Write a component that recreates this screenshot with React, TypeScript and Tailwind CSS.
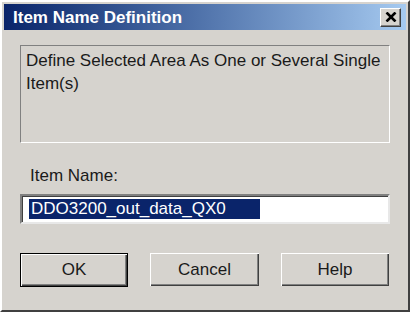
export default function App() {
  return (
    <div
      className="w-[410px] h-[312px] bg-[#d6d3ce] border-t-2 border-l-2 border-t-[#ffffff] border-l-[#ffffff] border-r-2 border-b-2 border-r-[#404040] border-b-[#404040] p-[2px] flex flex-col"
      style={{ fontFamily: '"Liberation Sans", Arial, sans-serif' }}
    >
      <div className="h-[26px] flex items-center justify-between pl-[9px] pr-[5px] bg-gradient-to-r from-[#0a246a] to-[#a6caf0]">
        <span className="text-white font-bold text-[17px] leading-none">Item Name Definition</span>
        <button className="w-[21px] h-[19px] bg-[#d6d3ce] border border-t-white border-l-white border-r-[#404040] border-b-[#404040] flex items-center justify-center shadow-[inset_-1px_-1px_0_#808080]">
          <svg width="12" height="10" viewBox="0 0 12 10">
            <path d="M1.5 0.5 L10.5 9.5 M10.5 0.5 L1.5 9.5" stroke="#000" strokeWidth="2.6" />
          </svg>
        </button>
      </div>

      <div className="flex-1 flex flex-col px-[16px] text-[#1a1a1a]">
        <div className="mt-[15px] h-[98px] border border-t-[#808080] border-l-[#808080] border-r-white border-b-white px-[5px] pt-[3px] text-[17px] leading-[23px]">
          Define Selected Area As One or Several Single Item(s)
        </div>

        <div className="mt-[23px] pl-[10px] text-[17px] leading-[20px]">Item Name:</div>

        <div className="mt-[8px] h-[30px] bg-white border-2 border-t-[#808080] border-l-[#808080] border-r-[#e8e8e8] border-b-[#e8e8e8] flex items-center pl-[7px] shadow-[inset_1px_1px_0_#404040]">
          <span className="w-[231px] bg-[#0a246a] text-white text-[17px] leading-[20px] pl-[2px]">DDO3200_out_data_QX0</span>
        </div>

        <div className="mt-[29px] flex justify-between pr-[1px]">
          <button className="w-[108px] h-[34px] border border-black bg-[#d6d3ce] text-[17px] shadow-[inset_1px_1px_0_#ffffff,inset_-1px_-1px_0_#404040,inset_-2px_-2px_0_#808080]">
            OK
          </button>
          <button className="w-[109px] h-[33px] bg-[#d6d3ce] text-[17px] shadow-[inset_1px_1px_0_#ffffff,inset_-1px_-1px_0_#404040,inset_-2px_-2px_0_#808080]">
            Cancel
          </button>
          <button className="w-[108px] h-[33px] bg-[#d6d3ce] text-[17px] shadow-[inset_1px_1px_0_#ffffff,inset_-1px_-1px_0_#404040,inset_-2px_-2px_0_#808080]">
            Help
          </button>
        </div>
      </div>
    </div>
  )
}
